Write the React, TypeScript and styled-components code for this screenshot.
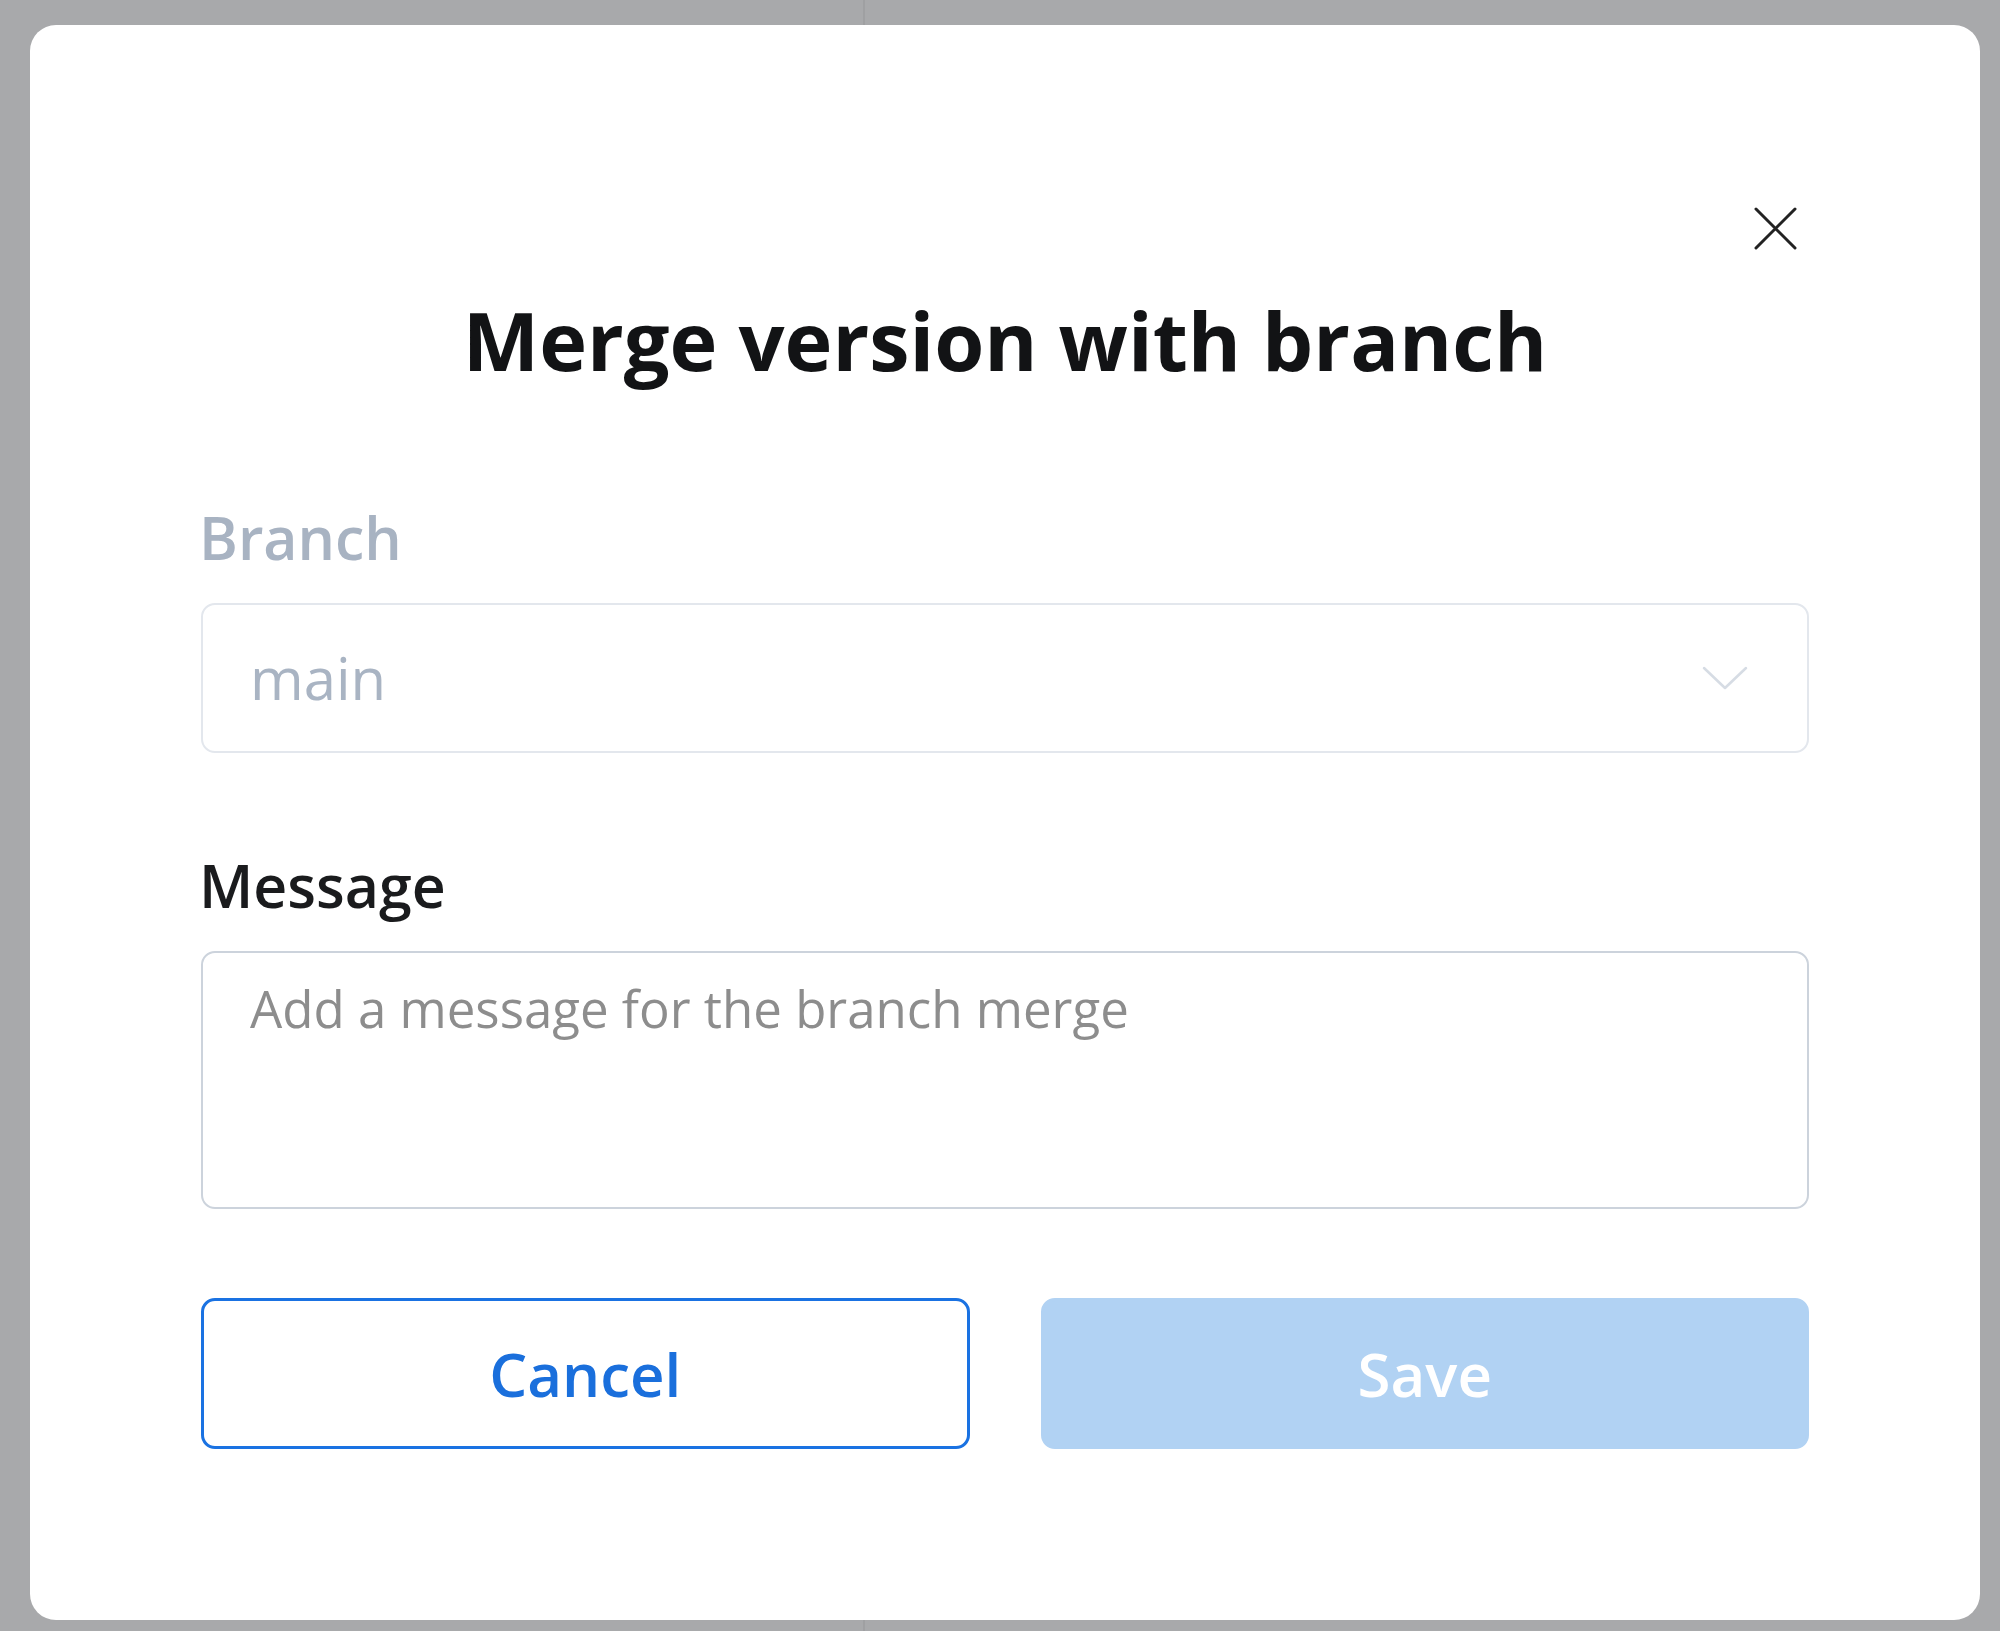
import React from "react";
import styled, { createGlobalStyle } from "styled-components";

const Global = createGlobalStyle`
  html, body {
    margin: 0;
    padding: 0;
  }
  body {
    background: #a8a9ab;
    font-family: "Open Sans", "Noto Sans", sans-serif;
  }
  * { box-sizing: border-box; }
`;

const Backdrop = styled.div`
  width: 2000px;
  min-height: 1631px;
  padding: 25px 20px 11px 30px;
  background:
    linear-gradient(to right, transparent 863px, #9fa0a2 863px, #9fa0a2 865px, transparent 865px),
    #a8a9ab;
`;

const Modal = styled.div`
  position: relative;
  width: 1950px;
  background: #ffffff;
  border-radius: 26px;
  padding: 265px 171px 171px 171px;
  display: flex;
  flex-direction: column;
`;

const CloseButton = styled.button`
  position: absolute;
  top: 182px;
  right: 183px;
  width: 43px;
  height: 43px;
  padding: 0;
  border: none;
  background: transparent;
  cursor: pointer;
  display: flex;
`;

const Title = styled.h1`
  margin: 0 0 111px;
  font-size: 81px;
  line-height: 100px;
  font-weight: 700;
  color: #121315;
  text-align: center;
`;

const Field = styled.div<{ $gap?: number }>`
  display: flex;
  flex-direction: column;
  gap: 30px;
  margin-bottom: ${(p) => p.$gap ?? 0}px;
`;

const Label = styled.label<{ $disabled?: boolean }>`
  font-size: 59px;
  line-height: 72px;
  font-weight: 600;
  margin-left: -2px;
  color: ${(p) => (p.$disabled ? "#a8b3c2" : "#1a1b1d")};
`;

const SelectBox = styled.div`
  height: 150px;
  border: 2px solid #e3e7ed;
  border-radius: 14px;
  display: flex;
  align-items: center;
  justify-content: space-between;
  padding: 0 59px 0 47px;
`;

const SelectValue = styled.span`
  font-size: 58px;
  line-height: 1;
  color: #a9b4c3;
`;

const MessageArea = styled.textarea`
  height: 258px;
  border: 2px solid #ccd3dc;
  border-radius: 14px;
  padding: 20px 47px;
  font-family: "Open Sans", "Noto Sans", sans-serif;
  font-size: 51px;
  line-height: 70px;
  color: #222;
  resize: none;
  outline: none;
  &::placeholder {
    color: #8d8d8d;
  }
`;

const Actions = styled.div`
  display: grid;
  grid-template-columns: 1fr 1fr;
  gap: 71px;
`;

const Button = styled.button<{ $variant: "outline" | "primary" }>`
  height: 151px;
  border-radius: 14px;
  font-family: "Open Sans", "Noto Sans", sans-serif;
  font-size: 60px;
  font-weight: 600;
  cursor: pointer;
  border: 3px solid ${(p) => (p.$variant === "outline" ? "#1a72e2" : "#b1d2f3")};
  background: ${(p) => (p.$variant === "outline" ? "#ffffff" : "#b1d2f3")};
  color: ${(p) => (p.$variant === "outline" ? "#1a6fdc" : "#ffffff")};
`;

export default function App() {
  return (
    <>
      <Global />
      <Backdrop>
        <Modal>
          <CloseButton aria-label="Close">
            <svg width="43" height="43" viewBox="0 0 43 43">
              <path
                d="M2 2 L41 41 M41 2 L2 41"
                stroke="#222"
                strokeWidth="3"
                strokeLinecap="round"
                fill="none"
              />
            </svg>
          </CloseButton>
          <Title>Merge version with branch</Title>
          <Field $gap={96}>
            <Label $disabled>Branch</Label>
            <SelectBox>
              <SelectValue>main</SelectValue>
              <svg width="46" height="24" viewBox="0 0 46 24">
                <path
                  d="M2 2 L23 22 L44 2"
                  stroke="#d6dce4"
                  strokeWidth="2.5"
                  strokeLinecap="round"
                  strokeLinejoin="round"
                  fill="none"
                />
              </svg>
            </SelectBox>
          </Field>
          <Field $gap={89}>
            <Label>Message</Label>
            <MessageArea placeholder="Add a message for the branch merge" />
          </Field>
          <Actions>
            <Button $variant="outline">Cancel</Button>
            <Button $variant="primary">Save</Button>
          </Actions>
        </Modal>
      </Backdrop>
    </>
  );
}
